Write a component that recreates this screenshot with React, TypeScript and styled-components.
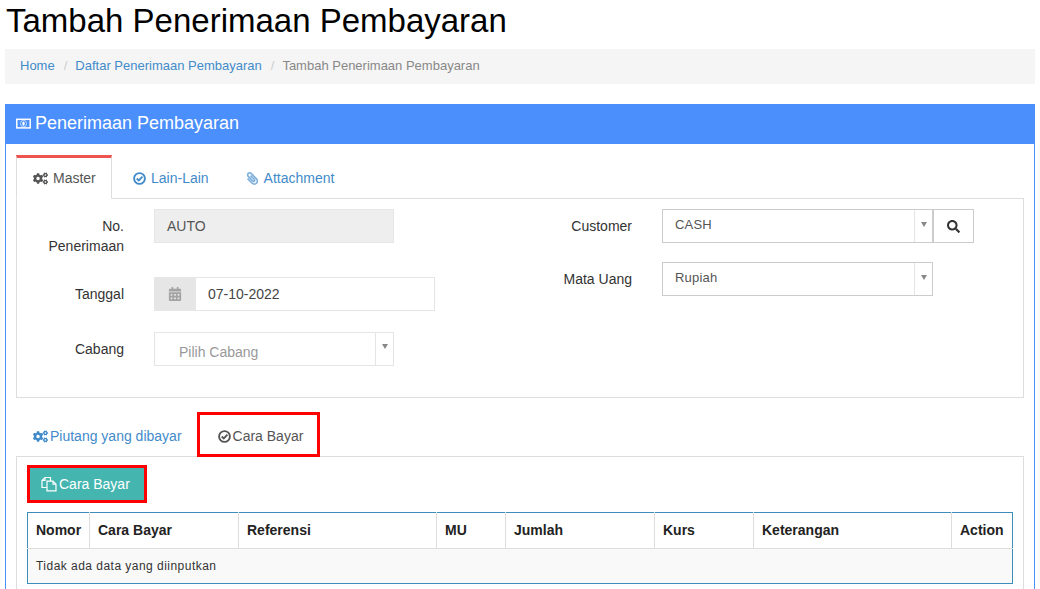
import React from 'react';
import styled, { createGlobalStyle } from 'styled-components';
import { FaCogs, FaPaperclip, FaCalendarAlt, FaSearch } from 'react-icons/fa';

const GlobalStyle = createGlobalStyle`
  * { box-sizing: border-box; }
  html, body {
    margin: 0;
    padding: 0;
    background: #fff;
    overflow: hidden;
  }
  body {
    font-family: "Liberation Sans", Arial, sans-serif;
    font-size: 14px;
    line-height: 20px;
    color: #333;
  }
`;

const COLUMNS = [
  { name: 'Nomor', width: 62 },
  { name: 'Cara Bayar', width: 149 },
  { name: 'Referensi', width: 198 },
  { name: 'MU', width: 69 },
  { name: 'Jumlah', width: 149 },
  { name: 'Kurs', width: 99 },
  { name: 'Keterangan', width: 198 },
  { name: 'Action', width: 61 },
];

const CheckIcon = () => (
  <svg width="13" height="13" viewBox="0 0 13 13" fill="none" stroke="currentColor">
    <circle cx="6.5" cy="6.5" r="5.4" strokeWidth="1.9" />
    <path d="M3.7 6.5 L5.8 8.5 L9.4 4.7" strokeWidth="1.9" />
  </svg>
);

const MoneyIcon = () => (
  <svg width="15" height="15" viewBox="0 0 15 15" fill="none" stroke="currentColor">
    <rect x="0.8" y="3.3" width="13.4" height="8.6" strokeWidth="1.5" />
    <ellipse cx="7.5" cy="7.6" rx="3" ry="3.4" strokeWidth="1" opacity="0.6" />
    <ellipse cx="7.5" cy="7.6" rx="1.2" ry="2.2" fill="currentColor" strokeWidth="0" />
  </svg>
);

const FilesIcon = () => (
  <svg width="16" height="16" viewBox="0 0 16 16" fill="none" stroke="currentColor" strokeWidth="1.2">
    <path d="M6 11.5 H1 V4.5 L4 1.5 H9.5 V5" />
    <path d="M4 1.5 V4.5 H1" />
    <path d="M6 14.8 V5.2 H12 L15 8.2 V14.8 Z" />
    <path d="M12 5.2 V8.2 H15" />
  </svg>
);

const App = () => {
  return (
    <Page>
      <GlobalStyle />
      <Title>Tambah Penerimaan Pembayaran</Title>
      <Breadcrumb>
        <Crumb href="#">Home</Crumb>
        <Slash>/</Slash>
        <Crumb href="#">Daftar Penerimaan Pembayaran</Crumb>
        <Slash>/</Slash>
        <CurrentCrumb>Tambah Penerimaan Pembayaran</CurrentCrumb>
      </Breadcrumb>

      <Panel>
        <PanelHeading>
          <MoneyIcon />
          Penerimaan Pembayaran
        </PanelHeading>
        <PanelBody>
          <Tabs>
            <MasterTab>
              <FaCogs size={15} />
              Master
            </MasterTab>
            <Tab>
              <CheckIcon />
              Lain-Lain
            </Tab>
            <Tab>
              <ClipWrap>
                <FaPaperclip size={13} />
              </ClipWrap>
              Attachment
            </Tab>
          </Tabs>

          <FormBox>
            <FormColumn>
              <LeftRow>
                <TallLabel>No. Penerimaan</TallLabel>
                <ReadonlyInput>AUTO</ReadonlyInput>
              </LeftRow>
              <LeftRow>
                <Label>Tanggal</Label>
                <DateGroup>
                  <DateAddon>
                    <FaCalendarAlt size={14} />
                  </DateAddon>
                  <DateValue>07-10-2022</DateValue>
                </DateGroup>
              </LeftRow>
              <LeftRow>
                <Label>Cabang</Label>
                <Select $muted>
                  <Placeholder>Pilih Cabang</Placeholder>
                  <Caret $muted />
                </Select>
              </LeftRow>
            </FormColumn>
            <RightColumn>
              <RightRow>
                <Label>Customer</Label>
                <Select>
                  <SelectText>CASH</SelectText>
                  <Caret />
                </Select>
                <SearchButton>
                  <FaSearch size={13} />
                </SearchButton>
              </RightRow>
              <RightRow>
                <Label>Mata Uang</Label>
                <Select>
                  <SelectText>Rupiah</SelectText>
                  <Caret />
                </Select>
              </RightRow>
            </RightColumn>
          </FormBox>

          <InnerTabs>
            <InnerTab>
              <FaCogs size={15} />
              Piutang yang dibayar
            </InnerTab>
            <ActiveInnerTab>
              <CheckIcon />
              Cara Bayar
            </ActiveInnerTab>
          </InnerTabs>

          <InnerBox>
            <AddButton>
              <FilesIcon />
              Cara Bayar
            </AddButton>
            <Table>
              <colgroup>
                {COLUMNS.map((c) => (
                  <col key={c.name} width={c.width} />
                ))}
              </colgroup>
              <thead>
                <tr>
                  {COLUMNS.map((c) => (
                    <Th key={c.name}>{c.name}</Th>
                  ))}
                </tr>
              </thead>
              <tbody>
                <tr>
                  <Td colSpan={COLUMNS.length}>Tidak ada data yang diinputkan</Td>
                </tr>
              </tbody>
            </Table>
          </InnerBox>
        </PanelBody>
      </Panel>
    </Page>
  );
};

export default App;

const Page = styled.div`
  width: 1040px;
  height: 589px;
  padding: 0 5px;
  overflow: hidden;
`;

const Title = styled.h1`
  margin: 0 0 7px 1px;
  height: 42px;
  font-size: 33px;
  font-weight: 400;
  line-height: 42px;
  color: #000;
`;

const Breadcrumb = styled.div`
  display: flex;
  align-items: center;
  height: 35px;
  margin-bottom: 20px;
  padding: 0 15px 1px;
  background: #f5f5f5;
  font-size: 13px;
`;

const Crumb = styled.a`
  color: #428bca;
  text-decoration: none;
`;

const CurrentCrumb = styled.span`
  color: #888;
`;

const Slash = styled.span`
  padding: 0 8px 0 9px;
  color: #ccc;
`;

const Panel = styled.div`
  width: 1030px;
  height: 520px;
  border: 1px solid #4a8ffb;
  border-bottom: 0;
`;

const PanelHeading = styled.div`
  display: flex;
  align-items: center;
  gap: 4px;
  height: 40px;
  margin: -1px -1px 0;
  padding: 0 11px 2px;
  background: #4a8ffb;
  color: #fff;
  font-size: 18px;
`;

const PanelBody = styled.div`
  padding: 11px 10px 0;
`;

const Tabs = styled.div`
  display: flex;
  height: 44px;
  border-bottom: 1px solid #ddd;
`;

const Tab = styled.div`
  display: flex;
  align-items: center;
  gap: 5px;
  height: 43px;
  padding: 3px 16px 0 21px;
  color: #428bca;
  svg {
    flex: none;
  }
`;

const ClipWrap = styled.span`
  display: flex;
  transform: scaleX(-1);
  color: #7fb0dc;
`;

const MasterTab = styled(Tab)`
  width: 96px;
  height: 44px;
  padding: 0 0 0 16px;
  border: 1px solid #ddd;
  border-top: 3px solid #ef5350;
  border-bottom: 1px solid #fff;
  background: #fff;
  color: #555;
`;

const FormBox = styled.div`
  display: grid;
  grid-template-columns: 508px 1fr;
  height: 199px;
  border: 1px solid #ddd;
  border-top: 0;
`;

const FormColumn = styled.div`
  display: flex;
  flex-direction: column;
  padding-top: 10px;
`;

const RightColumn = styled(FormColumn)`
  gap: 19px;
`;

const LeftRow = styled.div`
  display: grid;
  grid-template-columns: 107px 240px;
  column-gap: 30px;
  align-items: start;
  min-height: 34px;
  margin-bottom: 34px;
  &:nth-child(2) {
    margin-bottom: 21px;
  }
  &:nth-child(1) {
    margin-bottom: 34px;
  }
`;

const RightRow = styled.div`
  display: grid;
  grid-template-columns: 137px 271px 41px;
  column-gap: 0;
  align-items: start;
  height: 34px;
`;

const Label = styled.label`
  display: block;
  padding-top: 7px;
  text-align: right;
  color: #333;
  ${RightRow} & {
    margin-right: 30px;
  }
`;

const TallLabel = styled(Label)`
  padding: 7px 0 0 20px;
  margin-bottom: -20px;
`;

const ReadonlyInput = styled.div`
  height: 34px;
  padding: 6px 12px;
  background: #eee;
  border: 1px solid #e6e6e6;
  color: #555;
`;

const DateGroup = styled.div`
  display: flex;
  width: 281px;
  height: 34px;
  border: 1px solid #e5e5e5;
`;

const DateAddon = styled.div`
  display: flex;
  align-items: center;
  justify-content: center;
  width: 42px;
  margin: -1px 0 -1px -1px;
  background: #e6e6e6;
  color: #a3a3a3;
`;

const DateValue = styled.div`
  padding: 6px 12px;
  color: #444;
`;

const Select = styled.div<{ $muted?: boolean }>`
  position: relative;
  display: flex;
  height: 34px;
  border: 1px solid ${(p) => (p.$muted ? '#e5e5e5' : '#ccc')};
  background: #fff;
`;

const SelectText = styled.span`
  padding: 5px 12px;
  font-size: 13px;
  letter-spacing: 0.2px;
  color: #555;
`;

const Placeholder = styled.span`
  padding: 9px 24px 0;
  color: #999;
`;

const Caret = styled.span<{ $muted?: boolean }>`
  position: absolute;
  top: 0;
  right: 0;
  bottom: 0;
  width: 18px;
  border-left: 1px solid #e5e5e5;
  &::after {
    content: '';
    position: absolute;
    top: ${(p) => (p.$muted ? '11px' : '12px')};
    left: 6px;
    border-style: solid;
    border-width: 5px 3px 0;
    border-color: #888 transparent transparent;
  }
`;

const SearchButton = styled.div`
  display: flex;
  align-items: center;
  justify-content: center;
  height: 34px;
  border: 1px solid #ccc;
  color: #333;
`;

const InnerTabs = styled.div`
  display: flex;
  height: 58px;
  padding-top: 14px;
`;

const InnerTab = styled.div`
  display: flex;
  align-items: center;
  height: 45px;
  padding: 3px 15px 0 17px;
  gap: 2px;
  color: #428bca;
`;

const ActiveInnerTab = styled(InnerTab)`
  gap: 2px;
  width: 123px;
  height: 45px;
  padding: 3px 0 0 21px;
  outline: 3px solid #f00;
  outline-offset: -3px;
  background: #fff;
  color: #555;
  position: relative;
`;

const InnerBox = styled.div`
  height: 140px;
  padding: 8px 10px 0;
  border: 1px solid #ddd;
  border-bottom: 0;
`;

const AddButton = styled.div`
  display: flex;
  align-items: center;
  gap: 2px;
  width: 120px;
  height: 38px;
  margin-bottom: 9px;
  padding-left: 11px;
  border: 3px solid #f00;
  background: #45b6af;
  color: #fff;
`;

const Table = styled.table`
  width: 986px;
  table-layout: fixed;
  border-collapse: collapse;
  border: 1px solid #3c8dbc;
  font-size: 14px;
`;

const Th = styled.th`
  height: 36px;
  padding: 0 8px 2px;
  border-right: 1px solid #ddd;
  border-bottom: 1px solid #ddd;
  background: #fff;
  text-align: left;
  font-weight: 700;
  font-size: 14px;
  color: #222;
  white-space: nowrap;
  &:last-child {
    border-right: 0;
  }
`;

const Td = styled.td`
  height: 35px;
  padding: 0 8px;
  background: #f9f9f9;
  font-size: 12px;
  letter-spacing: 0.47px;
  color: #333;
`;
